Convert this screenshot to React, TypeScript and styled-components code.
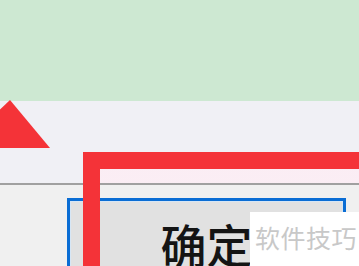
import React from "react";
import styled, {createGlobalStyle} from "styled-components";

const GlobalStyle = createGlobalStyle`
    html, body {
        margin: 0;
        padding: 0;
        background: #f0f0f0;
    }
    body {
        font-family: "Noto Sans CJK SC", "Noto Sans", sans-serif;
    }
`;

const Page = styled.div`
    position: relative;
    width: 359px;
    height: 266px;
    overflow: hidden;
    display: flex;
    flex-direction: column;
    background: #f0f0f0;
`;

const GreenBand = styled.div`
    height: 101px;
    flex-shrink: 0;
    background: #cde8d2;
`;

const Panel = styled.div`
    height: 82px;
    flex-shrink: 0;
    background: #f0f0f5;
`;

const Separator = styled.div`
    height: 2px;
    flex-shrink: 0;
    background: #a0a0a0;
`;

const Footer = styled.div`
    flex: 1;
    padding: 13px 13px 0 67px;
    background: #f0f0f0;
`;

const Button = styled.div`
    box-sizing: border-box;
    height: 100px;
    border: 3px solid #0a6dd4;
    box-shadow: inset 0 0 0 1px #d6e6f5;
    background: #e1e1e1;
    display: flex;
    justify-content: center;
    padding-top: 19px;
`;

const ButtonLabel = styled.span`
    font-family: "Noto Sans CJK SC", sans-serif;
    font-size: 46px;
    font-weight: 500;
    line-height: 1;
    color: #141414;
`;

const Arrow = styled.svg`
    position: absolute;
    left: 0;
    top: 98px;
`;

const RedFrame = styled.div`
    position: absolute;
    left: 83px;
    top: 152px;
    width: 400px;
    height: 200px;
    border-top: 17px solid #f43338;
    border-left: 17px solid #f43338;
    background: linear-gradient(to bottom, rgba(255, 236, 244, 0.7) 0, rgba(255, 236, 244, 0.7) 14px, transparent 14px);
`;

const Watermark = styled.div`
    position: absolute;
    left: 250px;
    top: 212px;
    right: 0;
    bottom: 0;
    background: #ffffff;
    padding: 13px 0 0 5px;
    font-family: "Noto Sans CJK SC", sans-serif;
    font-size: 25px;
    line-height: 1;
    color: #c8c8c8;
    letter-spacing: 0.5px;
`;

export default function App() {
    return (
        <Page>
            <GlobalStyle/>
            <GreenBand/>
            <Panel/>
            <Separator/>
            <Footer>
                <Button>
                    <ButtonLabel>确定</ButtonLabel>
                </Button>
            </Footer>
            <Arrow width={60} height={52} viewBox="0 0 60 52">
                <polygon points="10,2 50,50 -40,50" fill="#f43338"/>
            </Arrow>
            <RedFrame/>
            <Watermark>软件技巧</Watermark>
        </Page>
    );
}
